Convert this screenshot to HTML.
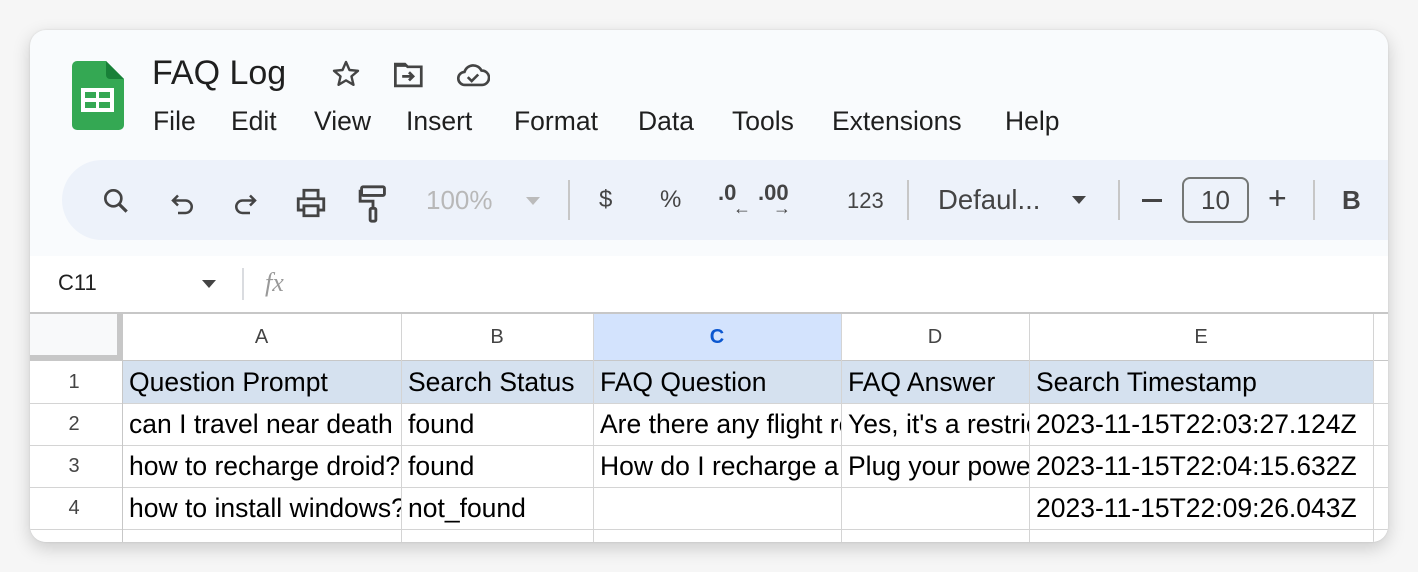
<!DOCTYPE html>
<html><head><style>
*{margin:0;padding:0;box-sizing:border-box}
body{width:1418px;height:572px;background:#f6f6f6;font-family:"Liberation Sans",Arial,sans-serif;position:relative;overflow:hidden}
.win{position:absolute;left:30px;top:30px;width:1358px;height:512px;background:#f9fbfd;border-radius:16px;overflow:hidden;box-shadow:0 6px 18px rgba(0,0,0,.18),0 0 2px rgba(0,0,0,.1)}
.a{position:absolute;white-space:nowrap}
.menu{top:76px;font-size:26.5px;color:#1f1f1f}
.tb{position:absolute;left:32px;top:130px;width:1400px;height:80px;background:#edf2fa;border-radius:40px}
.ti{position:absolute;font-size:24px;color:#444;top:156px}
.sep{position:absolute;top:150px;width:2px;height:40px;background:#c7c7c7}
.fb{position:absolute;left:0;top:226px;width:1358px;height:56px;background:#fff}
.grid{position:absolute;left:0;top:282px;width:1358px;height:240px;background:#fff;border-top:2px solid #c7c7c7}
.c{position:absolute;font-size:26.5px;color:#000;overflow:hidden;white-space:nowrap;padding-left:6px;line-height:44px}
.vl{position:absolute;width:1px;background:#d4d4d4}
.hl{position:absolute;height:1px;background:#d4d4d4;left:0;width:1358px}
.rn{position:absolute;width:88px;text-align:center;font-size:20px;color:#444;line-height:42px}
.ch{position:absolute;top:0;height:46px;line-height:46px;text-align:center;font-size:20px;color:#444}
</style></head><body>
<div class="win">
<svg class="a" style="left:42px;top:31px" width="52" height="70" viewBox="0 0 52 70"><path d="M5 0H34L52 18V64a5 5 0 0 1-5 5H5a5 5 0 0 1-5-5V5a5 5 0 0 1 5-5z" fill="#34a853"/><path d="M34 0L52 18H38a4 4 0 0 1-4-4z" fill="#188038"/><rect x="9" y="27" width="33" height="24" fill="#fff"/><rect x="13" y="31" width="11" height="6" fill="#34a853"/><rect x="27" y="31" width="11" height="6" fill="#34a853"/><rect x="13" y="41" width="11" height="6" fill="#34a853"/><rect x="27" y="41" width="11" height="6" fill="#34a853"/></svg>
<div class="a" style="left:122px;top:24px;font-size:34px;color:#1f1f1f">FAQ Log</div>
<svg class="a" style="left:300px;top:28px" width="32" height="32" viewBox="0 0 24 24"><path d="M12 3l2.6 6 6.4.6-4.9 4.2 1.5 6.3L12 16.8 6.4 20.1l1.5-6.3L3 9.6 9.4 9z" fill="none" stroke="#444" stroke-width="1.8" stroke-linejoin="round"/></svg>
<svg class="a" style="left:362px;top:30px" width="34" height="30" viewBox="0 0 24 22"><path d="M2 3h7l2 2h10v14H2z" fill="none" stroke="#444" stroke-width="2"/><path d="M2 3h7l2 2H2z" fill="#444"/><path d="M7 12h8m-3-3l3 3-3 3" fill="none" stroke="#444" stroke-width="2"/></svg>
<svg class="a" style="left:426px;top:31px" width="34" height="27" viewBox="0 0 26 20"><path d="M7 18a5 5 0 0 1-.5-10A7 7 0 0 1 19.5 7 5.5 5.5 0 0 1 20 18z" fill="none" stroke="#444" stroke-width="2"/><path d="M9 12l3 3 5-5" fill="none" stroke="#444" stroke-width="2"/></svg>
<div class="a menu" style="left:123px">File</div>
<div class="a menu" style="left:201px">Edit</div>
<div class="a menu" style="left:284px">View</div>
<div class="a menu" style="left:376px">Insert</div>
<div class="a menu" style="left:484px">Format</div>
<div class="a menu" style="left:608px">Data</div>
<div class="a menu" style="left:702px">Tools</div>
<div class="a menu" style="left:802px">Extensions</div>
<div class="a menu" style="left:975px">Help</div>
<div class="tb"></div>
<svg class="a" style="left:70px;top:155px" width="32" height="32" viewBox="0 0 24 24"><circle cx="10" cy="10" r="6" fill="none" stroke="#444" stroke-width="2"/><path d="M14.5 14.5L20 20" stroke="#444" stroke-width="2.4"/></svg>
<svg class="a" style="left:138px;top:158px" width="30" height="30" viewBox="0 0 24 24"><path d="M8 6L4 10l4 4M4 10h10a5 5 0 0 1 0 10H8" fill="none" stroke="#444" stroke-width="2"/></svg>
<svg class="a" style="left:200px;top:158px" width="30" height="30" viewBox="0 0 24 24"><path d="M16 6l4 4-4 4M20 10H10a5 5 0 0 0 0 10h6" fill="none" stroke="#444" stroke-width="2"/></svg>
<svg class="a" style="left:264px;top:156px" width="34" height="34" viewBox="0 0 24 24"><path d="M7 8V3h10v5M6 17H3V9h18v8h-3M7 14h10v7H7z" fill="none" stroke="#444" stroke-width="2"/></svg>
<svg class="a" style="left:328px;top:154px" width="30" height="40" viewBox="0 0 20 28"><rect x="2" y="2" width="16" height="6" rx="1" fill="none" stroke="#444" stroke-width="2"/><path d="M2 5H1v7h9v5" fill="none" stroke="#444" stroke-width="2"/><rect x="8" y="17" width="4" height="9" rx="1" fill="none" stroke="#444" stroke-width="2"/></svg>
<div class="ti" style="left:396px;color:#b8b8b8;font-size:26px;top:155px">100%</div>
<svg class="a" style="left:496px;top:167px" width="14" height="8"><path d="M0 0h14L7 8z" fill="#bbb"/></svg>
<div class="sep" style="left:538px"></div>
<div class="ti" style="left:569px">$</div>
<div class="ti" style="left:630px">%</div>
<div class="ti" style="left:688px;top:150px;font-weight:bold;font-size:22px">.0</div><div class="ti" style="left:703px;top:168px;font-size:18px;font-weight:bold">←</div>
<div class="ti" style="left:728px;top:150px;font-weight:bold;font-size:22px">.00</div><div class="ti" style="left:743px;top:168px;font-size:18px;font-weight:bold">→</div>
<div class="ti" style="left:817px;font-size:22px;top:158px">123</div>
<div class="sep" style="left:877px"></div>
<div class="ti" style="left:908px;font-size:27.5px;top:154px">Defaul...</div>
<svg class="a" style="left:1042px;top:166px" width="14" height="8"><path d="M0 0h14L7 8z" fill="#444"/></svg>
<div class="sep" style="left:1088px"></div>
<div class="a" style="left:1112px;top:169px;width:20px;height:3px;background:#444"></div>
<div class="a" style="left:1152px;top:147px;width:67px;height:46px;border:2px solid #747775;border-radius:8px;text-align:center;line-height:42px;font-size:26px;color:#444">10</div>
<div class="ti" style="left:1238px;font-size:32px;top:150px">+</div>
<div class="sep" style="left:1283px"></div>
<div class="ti" style="left:1312px;font-weight:bold;font-size:26px;top:155px">B</div>
<div class="fb"></div>
<div class="a" style="left:28px;top:240px;font-size:22px;color:#1f1f1f">C11</div>
<svg class="a" style="left:172px;top:250px" width="14" height="8"><path d="M0 0h14L7 8z" fill="#444"/></svg>
<div class="a" style="left:212px;top:238px;width:2px;height:32px;background:#dadce0"></div>
<div class="a" style="left:235px;top:238px;font-size:26px;color:#999;font-style:italic;font-family:'Liberation Serif',serif">fx</div>
<div class="grid">
<div class="a" style="left:0;top:0;width:92px;height:46px;background:#f8f9fa;border-right:5px solid #c7c7c7;border-bottom:5px solid #c7c7c7"></div>
<div class="a" style="left:563px;top:0;width:248px;height:46px;background:#d3e3fd"></div>
<div class="a" style="left:92px;top:46px;width:1251px;height:43px;background:#d5e1ef"></div>
<div class="ch" style="left:92px;width:279px">A</div>
<div class="ch" style="left:371px;width:192px">B</div>
<div class="ch" style="left:563px;width:248px;font-weight:bold;color:#0b57d0">C</div>
<div class="ch" style="left:811px;width:188px">D</div>
<div class="ch" style="left:999px;width:344px">E</div>
<div class="hl" style="top:46px;background:#c7c7c7"></div>
<div class="hl" style="top:89px"></div>
<div class="hl" style="top:131px"></div>
<div class="hl" style="top:173px"></div>
<div class="hl" style="top:215px"></div>
<div class="vl" style="left:92px;top:0;height:240px;background:#c7c7c7"></div>
<div class="vl" style="left:371px;top:0;height:240px"></div>
<div class="vl" style="left:563px;top:0;height:240px"></div>
<div class="vl" style="left:811px;top:0;height:240px"></div>
<div class="vl" style="left:999px;top:0;height:240px"></div>
<div class="vl" style="left:1343px;top:0;height:240px"></div>
<div class="rn" style="top:47px">1</div><div class="rn" style="top:89px">2</div><div class="rn" style="top:131px">3</div><div class="rn" style="top:173px">4</div><div class="rn" style="top:215px">5</div>
<div class="c" style="left:93px;top:46px;width:278px">Question Prompt</div>
<div class="c" style="left:372px;top:46px;width:191px">Search Status</div>
<div class="c" style="left:564px;top:46px;width:247px">FAQ Question</div>
<div class="c" style="left:812px;top:46px;width:187px">FAQ Answer</div>
<div class="c" style="left:1000px;top:46px;width:343px">Search Timestamp</div>
<div class="c" style="left:93px;top:88px;width:278px">can I travel near death</div>
<div class="c" style="left:372px;top:88px;width:191px">found</div>
<div class="c" style="left:564px;top:88px;width:247px">Are there any flight restrictions</div>
<div class="c" style="left:812px;top:88px;width:187px">Yes, it's a restricted</div>
<div class="c" style="left:1000px;top:88px;width:343px">2023-11-15T22:03:27.124Z</div>
<div class="c" style="left:93px;top:130px;width:278px">how to recharge droid?</div>
<div class="c" style="left:372px;top:130px;width:191px">found</div>
<div class="c" style="left:564px;top:130px;width:247px">How do I recharge a droid</div>
<div class="c" style="left:812px;top:130px;width:187px">Plug your power</div>
<div class="c" style="left:1000px;top:130px;width:343px">2023-11-15T22:04:15.632Z</div>
<div class="c" style="left:93px;top:172px;width:278px">how to install windows?</div>
<div class="c" style="left:372px;top:172px;width:191px">not_found</div>
<div class="c" style="left:1000px;top:172px;width:343px">2023-11-15T22:09:26.043Z</div>
</div>
</div>
</body></html>
